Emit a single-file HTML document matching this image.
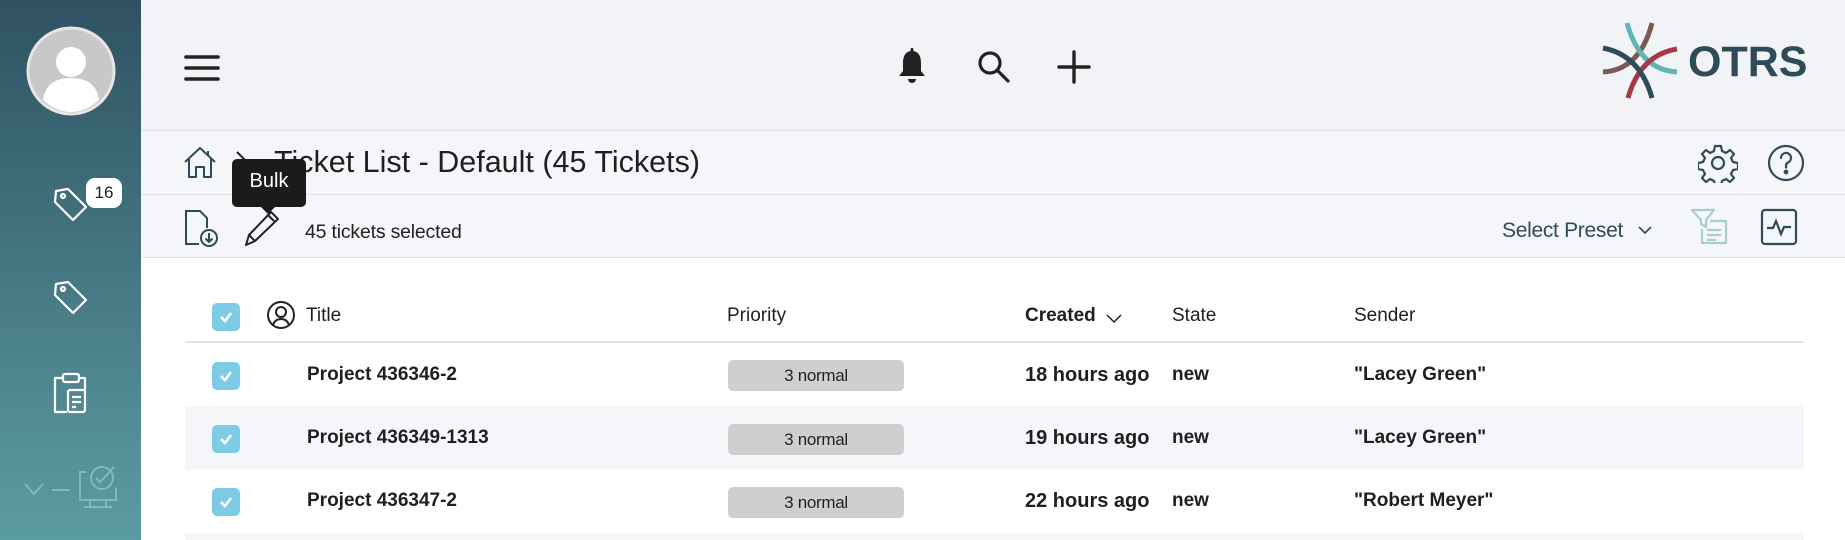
<!DOCTYPE html>
<html><head><meta charset="utf-8"><style>
*{margin:0;padding:0;box-sizing:border-box}
html,body{width:1845px;height:540px;overflow:hidden}
body{font-family:"Liberation Sans",sans-serif;background:#fff;color:#1f1f1f}
#w{position:relative;width:1845px;height:540px;overflow:hidden}
.a{position:absolute}
.side{left:0;top:0;width:141px;height:540px;background:linear-gradient(#2f5261,#5b9ca2)}
.hdr{left:141px;top:0;width:1704px;height:131px;background:#f1f3f7;border-bottom:1px solid #dde1e6}
.bc{left:141px;top:131px;width:1704px;height:64px;background:#f5f6f9;border-bottom:1px solid #dde1e6}
.tb{left:141px;top:195px;width:1704px;height:63px;background:#f5f6f9;border-bottom:1px solid #dde1e6}
.t{white-space:nowrap}
.cb{width:28px;height:28px;border-radius:5px;background:#7ecbe6}
.cb svg{position:absolute;left:7px;top:8px}
.row{left:185px;width:1619px;height:64px}
.b{font-weight:bold;font-size:19px}
.badge{width:176px;height:31px;border-radius:5px;background:#cfcfcf;text-align:center;line-height:31px;font-size:17px;color:#222;letter-spacing:-0.3px}
</style></head><body><div id="w">
<div class="a side"></div>
<svg class="a" style="left:26px;top:26px" width="90" height="90" viewBox="0 0 90 90"><circle cx="45" cy="45" r="43" fill="#c8c8c8" stroke="#e6e6e6" stroke-width="3"/><circle cx="45" cy="36" r="15" fill="#fff"/><path d="M17 74 Q20 52 45 52 Q70 52 73 74 Q60 86 45 86 Q30 86 17 74Z" fill="#fff"/></svg>
<svg class="a" style="left:52px;top:185px" width="40" height="40" viewBox="0 0 40 40" fill="none" stroke="#fff" stroke-width="2.2" stroke-linejoin="round"><path d="M4 6 L16 4 L34 22 L21 35 L3 17 Z"/><circle cx="11" cy="11" r="2"/></svg>
<div class="a" style="left:86px;top:178px;width:36px;height:30px;border-radius:9px;background:#fff;font-size:17px;text-align:center;line-height:30px;color:#222">16</div>
<svg class="a" style="left:52px;top:278px" width="40" height="40" viewBox="0 0 40 40" fill="none" stroke="#fff" stroke-width="2.2" stroke-linejoin="round"><path d="M4 6 L16 4 L34 22 L21 35 L3 17 Z"/><circle cx="11" cy="11" r="2"/></svg>
<svg class="a" style="left:51px;top:372px" width="40" height="44" viewBox="0 0 40 44" fill="none" stroke="#fff" stroke-width="2.2" stroke-linejoin="round"><path d="M12 6 H4 V40 H16"/><path d="M28 6 H34 V18"/><rect x="12" y="2" width="16" height="8" rx="2"/><rect x="17" y="18" width="17" height="22" rx="2"/><path d="M21 25h9M21 30h9M21 35h4"/></svg>
<svg class="a" style="left:22px;top:462px" width="100" height="50" viewBox="0 0 100 50" fill="none" stroke="#7fb9bd" stroke-width="2"><path d="M3 22 L12 32 L21 22"/><path d="M30 28 H48"/><path d="M64 10 H58 V38 H94 V26"/><path d="M68 38 V44 M84 38 V44 M62 45 H90"/><circle cx="80" cy="16" r="11"/><path d="M74 16 l4 4 l14 -15"/></svg>

<div class="a hdr"></div>
<svg class="a" style="left:184px;top:54px" width="36" height="28" viewBox="0 0 36 28"><path d="M2 3h32M2 14h32M2 25h32" stroke="#222" stroke-width="3.6" stroke-linecap="round"/></svg>
<svg class="a" style="left:896px;top:48px" width="32" height="36" viewBox="0 0 32 36"><path d="M16 3 C9 3 7 9 7 15 V23 L3 28 H29 L25 23 V15 C25 9 23 3 16 3Z" fill="#222"/><path d="M12 31 a4 4 0 0 0 8 0Z" fill="#222"/><rect x="14.5" y="0" width="3" height="4" rx="1.5" fill="#222"/></svg>
<svg class="a" style="left:976px;top:49px" width="36" height="36" viewBox="0 0 36 36" fill="none" stroke="#222" stroke-width="3.2" stroke-linecap="round"><circle cx="14" cy="14" r="10"/><path d="M22 22 L32 32"/></svg>
<svg class="a" style="left:1056px;top:49px" width="36" height="36" viewBox="0 0 36 36" stroke="#222" stroke-width="3.4" stroke-linecap="round"><path d="M18 3V33M3 18H33"/></svg>
<svg class="a" style="left:1600px;top:20px" width="82" height="82" viewBox="0 0 82 82" fill="none" stroke-width="5"><path d="M3 52 Q40 50 52 3" stroke="#7a5a52"/><path d="M27 3 Q40 50 77 52" stroke="#61b5b8"/><path d="M77 29 Q40 35 28 78" stroke="#a73845"/><path d="M3 28 Q40 35 52 78" stroke="#2e4c58"/></svg>
<div class="a" style="left:1688px;top:38px;font-size:43px;font-weight:bold;color:#2e4c58">OTRS</div>

<div class="a bc"></div>
<svg class="a" style="left:183px;top:145px" width="34" height="34" viewBox="0 0 34 34" fill="none" stroke="#2e4c58" stroke-width="2" stroke-linejoin="round"><path d="M2 17 L17 3 L32 17"/><path d="M6 14 V32 H13 V22 H21 V32 H28 V14"/><path d="M25 6 V11"/></svg>
<svg class="a" style="left:235px;top:150px" width="14" height="24" viewBox="0 0 14 24"><path d="M2 2 L12 12 L2 22" fill="none" stroke="#222" stroke-width="2"/></svg>
<div class="a t" style="left:274px;top:145px;font-size:30.5px;color:#1f1f1f">Ticket List - Default (45 Tickets)</div>
<svg class="a" style="left:1698px;top:143px" width="40" height="40" viewBox="0 0 40 40" fill="none" stroke="#2e4c58" stroke-width="2.2" stroke-linejoin="round"><path d="M17 3h6l1 5 4 2 4-3 4 4-3 4 2 4 5 1v6l-5 1-2 4 3 4-4 4-4-3-4 2-1 5h-6l-1-5-4-2-4 3-4-4 3-4-2-4-5-1v-6l5-1 2-4-3-4 4-4 4 3 4-2z"/><circle cx="20" cy="20" r="6"/></svg>
<svg class="a" style="left:1766px;top:143px" width="40" height="40" viewBox="0 0 40 40" fill="none" stroke="#2e4c58" stroke-width="2.2"><circle cx="20" cy="20" r="17"/><path d="M15 15 a5 5 0 1 1 7 4.5 q-2 1 -2 4 v1" stroke-linecap="round"/><circle cx="20" cy="29" r="1.3" fill="#2e4c58"/></svg>

<div class="a tb"></div>
<svg class="a" style="left:183px;top:208px" width="36" height="40" viewBox="0 0 36 40" fill="none" stroke="#2e4c58" stroke-width="2"><path d="M16 36 H3 V3 H17 L24 10 V20"/><circle cx="26" cy="30" r="8"/><path d="M26 25 V34 M22.5 30.5 L26 34 L29.5 30.5"/></svg>
<svg class="a" style="left:243px;top:208px" width="40" height="40" viewBox="0 0 40 40" fill="none" stroke="#222" stroke-width="2" stroke-linejoin="round"><path d="M3 37 L6 27 L28 4 L35 11 L12 33 Z"/><path d="M6 27 L12 33 M25 7 L32 14"/></svg>
<div class="a" style="left:232px;top:159px;width:74px;height:48px;background:#1b1b1b;border-radius:5px;color:#fff;font-size:20px;line-height:44px;text-align:center">Bulk</div>
<div class="a" style="left:259px;top:205px;width:0;height:0;border-left:9px solid transparent;border-right:9px solid transparent;border-top:9px solid #1b1b1b"></div>
<div class="a t" style="left:305px;top:221px;font-size:19.5px;color:#222;letter-spacing:-0.2px">45 tickets selected</div>
<div class="a t" style="left:1502px;top:219px;font-size:21px;color:#2e4c58;letter-spacing:-0.3px">Select Preset</div>
<svg class="a" style="left:1637px;top:224px" width="16" height="12" viewBox="0 0 16 12"><path d="M2 3 L8 9 L14 3" fill="none" stroke="#2e4c58" stroke-width="1.6"/></svg>
<svg class="a" style="left:1690px;top:207px" width="40" height="40" viewBox="0 0 40 40" fill="none" stroke="#a9ccd0" stroke-width="2.2" stroke-linejoin="round"><path d="M2 3 H24 L16 13 V20 L11 17 V13 Z"/><path d="M20 14 H36 V36 H12 V22"/><path d="M17 23h14M17 28h14M17 33h9"/></svg>
<svg class="a" style="left:1760px;top:208px" width="38" height="38" viewBox="0 0 38 38" fill="none" stroke="#2e4c58" stroke-width="2.2"><rect x="2" y="2" width="34" height="34" rx="3"/><path d="M7 20 H13 L16 13 L21 26 L24 19 H31"/></svg>

<div class="a cb" style="left:212px;top:303px"><svg width="14" height="12" viewBox="0 0 14 12"><path d="M2 6 L6 10 L12 2" fill="none" stroke="#fff" stroke-width="2.6"/></svg></div>
<svg class="a" style="left:266px;top:300px" width="30" height="30" viewBox="0 0 30 30" fill="none" stroke="#222" stroke-width="2"><circle cx="15" cy="15" r="13"/><circle cx="15" cy="12" r="5"/><path d="M7 25 Q9 19 15 19 Q21 19 23 25"/></svg>
<div class="a t" style="left:306px;top:305px;font-size:19px">Title</div>
<div class="a t" style="left:727px;top:305px;font-size:19px">Priority</div>
<div class="a t" style="left:1025px;top:305px;font-size:19px;font-weight:bold">Created</div>
<svg class="a" style="left:1105px;top:312px" width="18" height="12" viewBox="0 0 18 12"><path d="M2 3 L9 10 L16 3" fill="none" stroke="#222" stroke-width="1.5"/></svg>
<div class="a t" style="left:1172px;top:305px;font-size:19px">State</div>
<div class="a t" style="left:1354px;top:305px;font-size:19px">Sender</div>
<div class="a" style="left:185px;top:341px;width:1619px;height:2px;background:#e2e2e2"></div>

<div class="a row" style="top:343px;background:#fff"></div>
<div class="a row" style="top:406px;background:#f5f6fa"></div>
<div class="a row" style="top:470px;background:#fff"></div>
<div class="a row" style="top:533px;height:7px;background:#f5f6fa"></div>

<div class="a cb" style="left:212px;top:362px"><svg width="14" height="12" viewBox="0 0 14 12"><path d="M2 6 L6 10 L12 2" fill="none" stroke="#fff" stroke-width="2.6"/></svg></div>
<div class="a t b" style="left:307px;top:364px">Project 436346-2</div>
<div class="a badge" style="left:728px;top:360px">3 normal</div>
<div class="a t b" style="left:1025px;top:364px;font-size:20px">18 hours ago</div>
<div class="a t b" style="left:1172px;top:364px">new</div>
<div class="a t b" style="left:1354px;top:364px">"Lacey Green"</div>

<div class="a cb" style="left:212px;top:425px"><svg width="14" height="12" viewBox="0 0 14 12"><path d="M2 6 L6 10 L12 2" fill="none" stroke="#fff" stroke-width="2.6"/></svg></div>
<div class="a t b" style="left:307px;top:427px">Project 436349-1313</div>
<div class="a badge" style="left:728px;top:424px">3 normal</div>
<div class="a t b" style="left:1025px;top:427px;font-size:20px">19 hours ago</div>
<div class="a t b" style="left:1172px;top:427px">new</div>
<div class="a t b" style="left:1354px;top:427px">"Lacey Green"</div>

<div class="a cb" style="left:212px;top:488px"><svg width="14" height="12" viewBox="0 0 14 12"><path d="M2 6 L6 10 L12 2" fill="none" stroke="#fff" stroke-width="2.6"/></svg></div>
<div class="a t b" style="left:307px;top:490px">Project 436347-2</div>
<div class="a badge" style="left:728px;top:487px">3 normal</div>
<div class="a t b" style="left:1025px;top:490px;font-size:20px">22 hours ago</div>
<div class="a t b" style="left:1172px;top:490px">new</div>
<div class="a t b" style="left:1354px;top:490px">"Robert Meyer"</div>
</div></body></html>
